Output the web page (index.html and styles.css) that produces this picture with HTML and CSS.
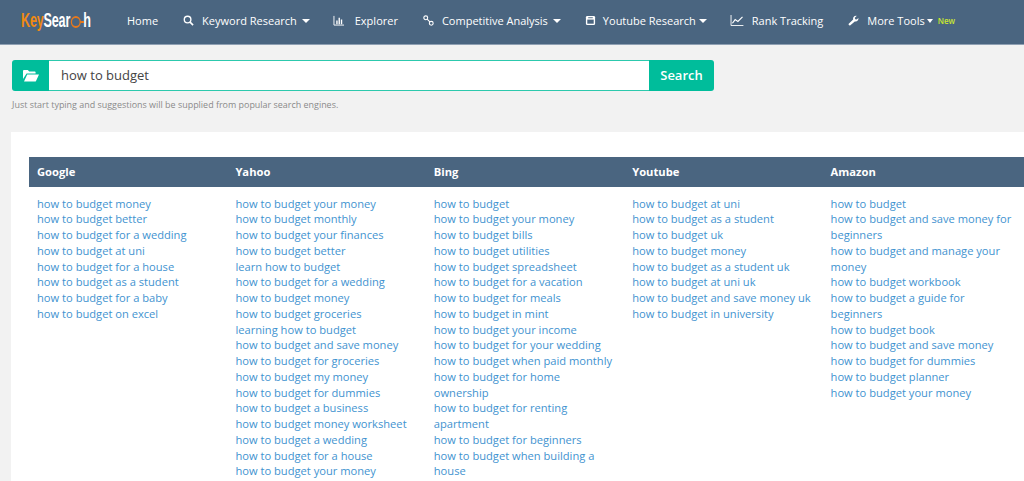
FILE: index.html
```html
<!DOCTYPE html>
<html lang="en">
<head>
<meta charset="utf-8">
<title>KeySearch</title>
<link rel="stylesheet" href="styles.css">
</head>
<body>
<header class="nav">
  <a class="logo"><span class="or">Key</span>Sear<span class="ring"></span>h</a>
  <a class="item home">Home</a>
  <a class="item kw"><svg class="ico" viewBox="0 0 12 12"><circle cx="5" cy="5" r="3.6" fill="none" stroke="#fff" stroke-width="1.5"/><path d="M7.7 7.7L11 11" stroke="#fff" stroke-width="1.8"/></svg>Keyword Research<i class="caret"></i></a>
  <a class="item ex"><svg class="ico chart" viewBox="0 0 12 12"><path d="M.5 1v10h11" fill="none" stroke="#fff"/><path d="M3 6h1.5v4H3zM5.5 3H7v7H5.5zM8 5h1.5v5H8z" fill="#fff"/></svg>Explorer</a>
  <a class="item ca"><svg class="ico" viewBox="0 0 12 12"><circle cx="3" cy="3" r="2.1" fill="none" stroke="#fff" stroke-width="1.2"/><circle cx="9" cy="9" r="2.1" fill="none" stroke="#fff" stroke-width="1.2"/><path d="M4.5 4.5l3 3" stroke="#fff" stroke-width="1.2"/></svg>Competitive Analysis<i class="caret"></i></a>
  <a class="item yt"><svg class="ico tight" viewBox="0 0 12 12"><rect x="1" y="1" width="10" height="10" rx="1.5" fill="#fff"/><path d="M2.5 5h7v4.5h-7z" fill="#4a6580"/><path d="M3.5 2.5h5v1h-5z" fill="#4a6580"/></svg>Youtube Research<i class="caret near"></i></a>
  <a class="item rt"><svg class="ico wide" viewBox="0 0 14 12"><path d="M.5 0v11.5H14" fill="none" stroke="#fff"/><path d="M2 9l3-4 3 2 5-5" fill="none" stroke="#fff" stroke-width="1.3"/></svg>Rank Tracking</a>
  <a class="item mt"><svg class="ico wrench" viewBox="0 0 12 12"><path d="M.8 9.6L5.6 4.8C5 2.8 6.8.6 9.4 1L7.4 3l.4 1.6 1.6.4 2-1.6c.2 2.6-1.8 4.2-4 3.6L2.6 11.2c-1 .8-2.6-.6-1.8-1.6z" fill="#fff"/></svg>More Tools<i class="caret small"></i><span class="new">New</span></a>
</header>

<main class="page">
  <form class="search">
    <span class="folder"><svg viewBox="0 0 16 13" width="16" height="13"><path d="M0 2.2C0 1.4.5 1 1.2 1h3.6l1.4 1.6h5.3c.7 0 1.1.4 1.1 1v1H3.6L0 10z" fill="#fff"/><path d="M4.2 5.6H16l-3 6.4c-.2.4-.5.6-1 .6H1z" fill="#fff"/></svg></span>
    <span class="field">how to budget</span>
    <span class="go">Search</span>
  </form>
  <p class="hint">Just start typing and suggestions will be supplied from popular search engines.</p>

  <section class="card">
    <div class="table">
      <div class="head">
        <span>Google</span><span>Yahoo</span><span>Bing</span><span>Youtube</span><span>Amazon</span>
      </div>
      <div class="cols">
        <ul>
          <li>how to budget money</li>
          <li>how to budget better</li>
          <li>how to budget for a wedding</li>
          <li>how to budget at uni</li>
          <li>how to budget for a house</li>
          <li>how to budget as a student</li>
          <li>how to budget for a baby</li>
          <li>how to budget on excel</li>
        </ul>
        <ul>
          <li>how to budget your money</li>
          <li>how to budget monthly</li>
          <li>how to budget your finances</li>
          <li>how to budget better</li>
          <li>learn how to budget</li>
          <li>how to budget for a wedding</li>
          <li>how to budget money</li>
          <li>how to budget groceries</li>
          <li>learning how to budget</li>
          <li>how to budget and save money</li>
          <li>how to budget for groceries</li>
          <li>how to budget my money</li>
          <li>how to budget for dummies</li>
          <li>how to budget a business</li>
          <li>how to budget money worksheet</li>
          <li>how to budget a wedding</li>
          <li>how to budget for a house</li>
          <li>how to budget your money</li>
        </ul>
        <ul>
          <li>how to budget</li>
          <li>how to budget your money</li>
          <li>how to budget bills</li>
          <li>how to budget utilities</li>
          <li>how to budget spreadsheet</li>
          <li>how to budget for a vacation</li>
          <li>how to budget for meals</li>
          <li>how to budget in mint</li>
          <li>how to budget your income</li>
          <li>how to budget for your wedding</li>
          <li>how to budget when paid monthly</li>
          <li>how to budget for home ownership</li>
          <li>how to budget for renting apartment</li>
          <li>how to budget for beginners</li>
          <li>how to budget when building a house</li>
        </ul>
        <ul>
          <li>how to budget at uni</li>
          <li>how to budget as a student</li>
          <li>how to budget uk</li>
          <li>how to budget money</li>
          <li>how to budget as a student uk</li>
          <li>how to budget at uni uk</li>
          <li>how to budget and save money uk</li>
          <li>how to budget in university</li>
        </ul>
        <ul>
          <li>how to budget</li>
          <li>how to budget and save money for beginners</li>
          <li>how to budget and manage your money</li>
          <li>how to budget workbook</li>
          <li>how to budget a guide for beginners</li>
          <li>how to budget book</li>
          <li>how to budget and save money</li>
          <li>how to budget for dummies</li>
          <li>how to budget planner</li>
          <li>how to budget your money</li>
        </ul>
      </div>
    </div>
  </section>
</main>
</body>
</html>
```
FILE: styles.css
```css
* { box-sizing: border-box; }
html, body { margin: 0; height: 481px; overflow: hidden; }
body { background: #f2f2f2; font-family: "Open Sans", sans-serif; color: #333; }

.nav {
  height: 45px;
  background: #4a6580;
  border-bottom: 1px solid #8fa0b3;
  display: flex;
  align-items: center;
  padding: 0 0 3px 21px;
  color: #fff;
  font-size: 11px;
  white-space: nowrap;
}
.logo {
  width: 106px;
  flex: none;
  font: bold 20px "Liberation Sans", sans-serif;
  letter-spacing: -.3px;
  color: #fff;
  display: flex;
  align-items: center;
  transform: scaleX(.63);
  transform-origin: left center;
}
.or { color: #f08a12; }
.ring {
  position: relative;
  flex: none;
  width: 16px; height: 12px; margin: 3px 4px 0 1px;
  border: 2px solid #e8791c; border-radius: 50%;
}
.ring::after {
  content: ""; position: absolute; left: 13px; top: 3px;
  width: 6px; height: 2px; background: #e8791c;
}
.item { display: flex; align-items: center; }
.ico { width: 11px; height: 11px; margin-right: 8px; flex: none; }
.ico.chart { width: 12px; margin-right: 10px; }
.ico.tight { margin-right: 7px; }
.ico.wide { width: 14px; margin-right: 8px; }
.ico.wrench { margin-right: 8px; }
.caret {
  width: 0; height: 0; margin-left: 5px; margin-top: 1px;
  border: 4px solid transparent; border-top-color: #fff; border-bottom: 0;
}
.caret.near { margin-left: 3px; }
.caret.small { margin-left: 2px; border-width: 4px 3px 0; }
.home { margin-right: 25px; }
.kw { margin-right: 23px; }
.ex { margin-right: 25px; }
.ca { margin-right: 24px; }
.yt { margin-right: 23px; }
.rt { margin-right: 25px; }
.new { color: #c8e632; font-size: 8px; font-weight: 600; margin-left: 5px; }

.page { padding: 15px 0 0 12px; }
.search { display: flex; width: 702px; height: 31px; }
.folder {
  width: 37px; background: #00bd9b; border-radius: 3px 0 0 3px;
  display: flex; align-items: center; justify-content: center;
}
.field {
  width: 600px; background: #fff;
  border-top: 1px solid #2cc9ad; border-bottom: 1px solid #2cc9ad;
  padding-left: 12px; font-size: 13px; line-height: 29px; color: #444;
}
.go {
  width: 65px; background: #00bd9b; color: #fff; border-radius: 0 3px 3px 0;
  font-size: 13px; font-weight: 600; text-align: center; line-height: 30px;
}
.hint { margin: 8px 0 0; font-size: 8.95px; line-height: 12px; color: #8a8a8a; }

.card {
  margin: 21px 0 0 -1px;
  background: #fff;
  padding: 25px 0 0 18px;
  height: 360px;
}
.table { width: 1000px; }
.head {
  display: grid;
  grid-template-columns: repeat(5, 198.4px);
  height: 30px;
  background: #4a6580;
  color: #fff;
  font-size: 11.2px;
  font-weight: 700;
  line-height: 30px;
}
.head span { padding-left: 8px; }
.cols {
  display: grid;
  grid-template-columns: repeat(5, 198.4px);
  padding-top: 8.5px;
}
.cols ul { margin: 0; padding: 0 8px; list-style: none; }
.cols li { font-size: 11.15px; line-height: 15.75px; color: #3f93d0; }
```
